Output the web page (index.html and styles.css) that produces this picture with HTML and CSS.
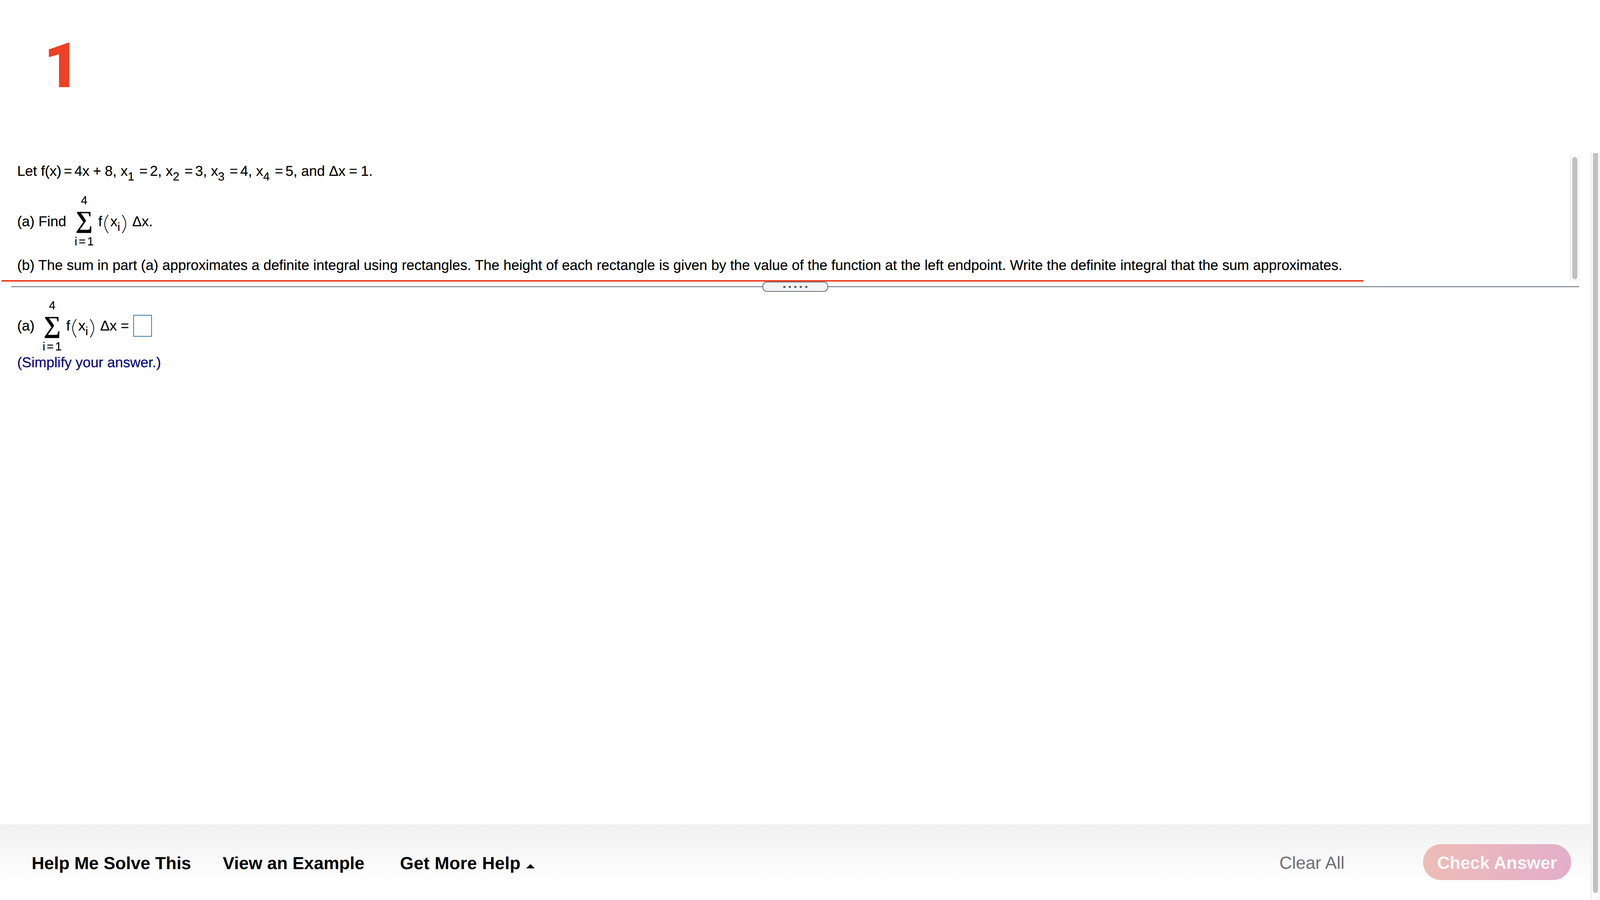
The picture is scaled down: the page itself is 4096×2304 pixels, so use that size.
FILE: index.html
```html
<!DOCTYPE html>
<html lang="en">
<head>
<meta charset="utf-8">
<title>Question 1</title>
<link rel="stylesheet" href="styles.css">
</head>
<body>
<div class="sheet">
  <div class="brand"><span class="number">1</span></div>
  <div class="question">
    <p class="line">Let f(x)<span class="op">=</span>4x<span class="op op-wide">+</span>8, x<sub>1</sub><span class="op">=</span>2, x<sub>2</sub><span class="op">=</span>3, x<sub>3</sub><span class="op">=</span>4, x<sub>4</sub><span class="op">=</span>5, and Δx<span class="op op-wide">=</span>1.</p>
    <div class="eq eq-find">
      <span class="eq-text find-label">(a) Find</span>
      <span class="sum">
        <span class="limit">4</span>
        <span class="sigma">∑</span>
        <span class="limit">i<span class="op-small">=</span>1</span>
      </span>
      <span class="eq-text term">f<svg class="paren" viewBox="0 0 11 49"><path d="M10 1C3 11 1 18 1 24.5S3 38 10 48"/></svg>x<sub>i</sub><svg class="paren" viewBox="0 0 11 49"><path d="M1 1C8 11 10 18 10 24.5S8 38 1 48"/></svg><span class="delta">Δx.</span></span>
    </div>
    <p class="line part-b">(b) The sum in part (a) approximates a definite integral using rectangles. The height of each rectangle is given by the value of the function at the left endpoint. Write the definite integral that the sum approximates.</p>
  </div>
  <div class="rule-red"></div>
  <div class="divider">
    <div class="divider-line first"></div>
    <div class="handle"><i class="dot"></i><i class="dot"></i><i class="dot"></i><i class="dot"></i><i class="dot"></i></div>
    <div class="divider-line"></div>
  </div>
  <div class="answer">
    <div class="eq eq-answer">
      <span class="eq-text ans-label">(a)</span>
      <span class="sum">
        <span class="limit">4</span>
        <span class="sigma">∑</span>
        <span class="limit">i<span class="op-small">=</span>1</span>
      </span>
      <span class="eq-text term">f<svg class="paren" viewBox="0 0 11 49"><path d="M10 1C3 11 1 18 1 24.5S3 38 10 48"/></svg>x<sub>i</sub><svg class="paren" viewBox="0 0 11 49"><path d="M1 1C8 11 10 18 10 24.5S8 38 1 48"/></svg><span class="delta">Δx<span class="op op-eq">=</span></span></span>
      <span class="input-box"></span>
    </div>
    <p class="hint">(Simplify your answer.)</p>
  </div>
  <div class="footer">
    <a class="action help">Help Me Solve This</a>
    <a class="action example">View an Example</a>
    <a class="action more">Get More Help<i class="caret"></i></a>
    <a class="clear">Clear All</a>
    <a class="check">Check Answer</a>
  </div>
  <div class="scroll scroll-inner"><div class="thumb"></div></div>
  <div class="scroll scroll-outer"><div class="thumb"></div></div>
</div>
</body>
</html>
```

FILE: styles.css
```css
html, body {
  margin: 0;
  padding: 0;
  background: #fff;
}
.sheet {
  width: 4096px;
  height: 2304px;
  position: relative;
  overflow: hidden;
  display: flex;
  flex-direction: column;
  font-family: "Liberation Sans", Arial, sans-serif;
  font-size: 36.4px;
  text-rendering: geometricPrecision;
  color: #000;
  background: #fff;
}
.brand {
  height: 415px;
  padding-left: 112px;
  box-sizing: border-box;
  flex: none;
}
.number {
  display: block;
  font-family: Roboto, "Liberation Sans", sans-serif;
  font-size: 160px;
  line-height: 160px;
  padding-top: 90px;
  font-weight: 900;
  color: #ee4023;
}
.question, .answer {
  padding-left: 44px;
  flex: none;
  -webkit-text-stroke: 0.25px currentColor;
}
.line {
  margin: 0;
  line-height: 46px;
  height: 46px;
  white-space: nowrap;
}
.op { margin: 0 6px; }
.op-wide { margin: 0 9px; }
.op-eq { margin: 0 6px 0 10px; }
.op-small { margin: 0 4px; }
sub {
  font-size: 30px;
  line-height: 0;
  vertical-align: -12px;
  margin-right: 7px;
}
.eq {
  display: flex;
  align-items: center;
  white-space: nowrap;
}
.eq-find { margin-top: 35px; }
.eq-text { line-height: 46px; }
.ans-label, .eq-answer .term { padding-bottom: 4px; }
.find-label { margin-right: 16px; }
.ans-label { margin-right: 15px; }
.sum {
  display: flex;
  flex-direction: column;
  align-items: center;
  width: 60px;
}
.limit {
  font-size: 30px;
  line-height: 36px;
  height: 36px;
}
.sigma {
  font-family: "Liberation Serif", "DejaVu Serif", serif;
  font-weight: 700;
  font-size: 62px;
  line-height: 62px;
  height: 69px;
}
.term { margin-left: 6px; display: flex; align-items: center; }
.paren {
  width: 11px;
  height: 49px;
  margin: 14px 5px 0;
  fill: none;
  stroke: #000;
  stroke-width: 2;
}
.term sub { margin: 30px 0 0 0; vertical-align: baseline; }
.delta { margin-left: 10px; }
.input-box {
  width: 48px;
  height: 56px;
  box-sizing: border-box;
  border: 2px solid #3d7ca6;
  margin-left: 5px;
  margin-bottom: 3px;
}
.part-b { margin-top: 19px; }
.rule-red {
  height: 4px;
  width: 3486px;
  margin: 15px 0 0 4px;
  background: #ee4023;
  flex: none;
}
.divider {
  display: flex;
  align-items: center;
  height: 26px;
  width: 4014px;
  margin-left: 29px;
  flex: none;
}
.divider-line {
  flex: 1;
  height: 2px;
  background: #5f6b78;
}
.divider-line.first { flex: none; width: 1923px; }
.handle {
  width: 168px;
  height: 26px;
  box-sizing: border-box;
  border: 2px solid #667280;
  border-radius: 11px;
  background: #f3f4f6;
  display: flex;
  align-items: center;
  justify-content: center;
  gap: 8px;
  flex: none;
}
.dot {
  width: 6px;
  height: 5px;
  border-radius: 2px;
  background: #555;
}
.answer { margin-top: 18px; }
.hint {
  margin: 0;
  line-height: 44px;
  color: #000080;
}
.footer {
  margin-top: auto;
  height: 194px;
  width: 4072px;
  box-sizing: border-box;
  padding-right: 50px;
  display: flex;
  align-items: center;
  flex: none;
  background: linear-gradient(#f1f1f1, #fefefe 75%);
  font-size: 44.8px;
}
.action {
  font-weight: 700;
  color: #000;
  padding-top: 6px;
}
.help { margin-left: 81px; }
.example { margin-left: 81px; }
.more { margin-left: 91px; display: flex; align-items: center; letter-spacing: 0.4px; }
.caret {
  width: 0;
  height: 0;
  margin: 14px 0 0 14px;
  border-left: 11px solid transparent;
  border-right: 11px solid transparent;
  border-bottom: 11px solid #000;
}
.clear {
  margin-left: auto;
  margin-right: 201px;
  color: #6d6f76;
  padding-top: 4px;
}
.check {
  width: 379px;
  height: 92px;
  box-sizing: border-box;
  border-radius: 46px;
  padding-top: 4px;
  display: flex;
  align-items: center;
  justify-content: center;
  font-weight: 700;
  color: #fbf8f9;
  background: linear-gradient(100deg, #edbdb6, #e2aecb);
  box-shadow: 0 0 4px rgba(255,255,255,.8);
}
.scroll {
  position: absolute;
  box-sizing: border-box;
  background: #fafafa;
  border-left: 2px solid #e9e9e9;
  border-right: 2px solid #f1f1f1;
  display: flex;
  justify-content: center;
}
.scroll .thumb {
  width: 13px;
  background: #c1c1c1;
  border-radius: 7px;
}
.scroll-inner {
  left: 4019px;
  top: 397px;
  width: 24px;
  height: 323px;
  padding: 5px 0;
}
.scroll-outer {
  left: 4072px;
  top: 392px;
  width: 24px;
  height: 1912px;
  padding-bottom: 18px;
}
.scroll-outer .thumb { border-radius: 0 0 7px 7px; }
```
